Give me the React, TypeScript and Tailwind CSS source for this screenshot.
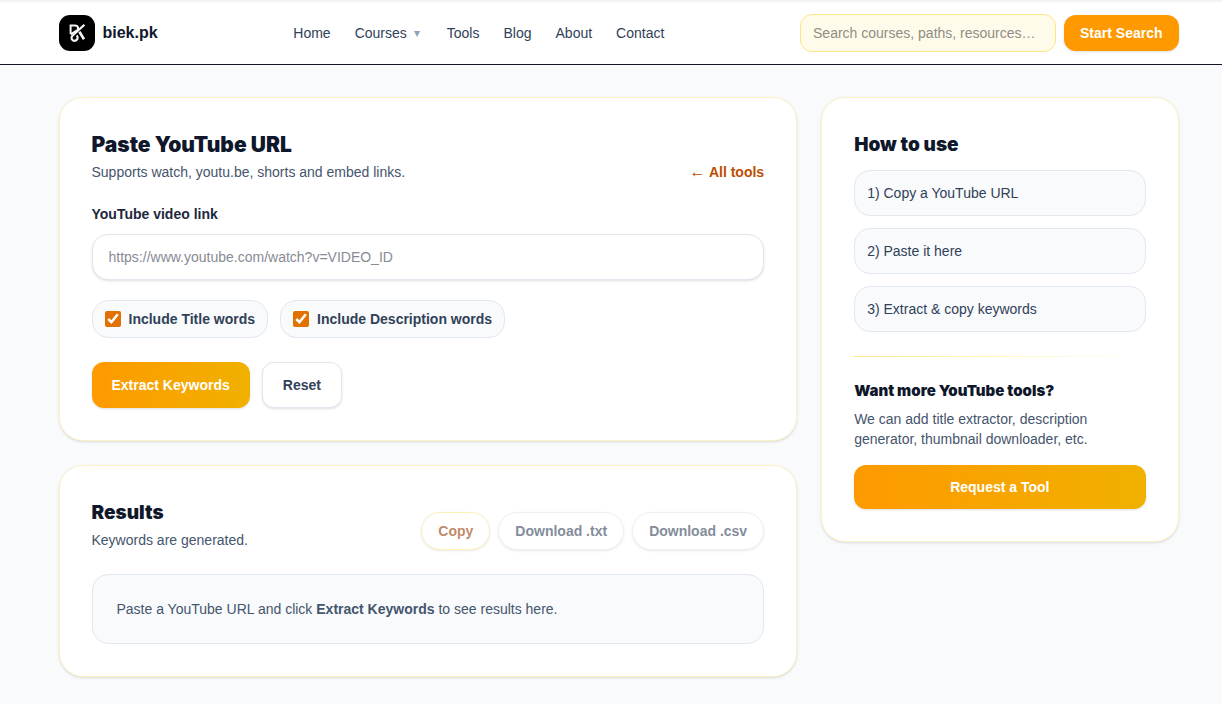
import { useState } from 'react';
import type { ReactNode } from 'react';

const links = ['Home', 'Courses', 'Tools', 'Blog', 'About', 'Contact'];

const steps = [
  '1) Copy a YouTube URL',
  '2) Paste it here',
  '3) Extract & copy keywords',
];

function Logo() {
  return (
    <svg viewBox="0 0 36 36" className="size-9" fill="none" stroke="#f5f5f5" aria-hidden="true">
      <rect width="36" height="36" rx="11" fill="black" stroke="none" />
      <path d="M11.6 19V10.6h4.2c4 0 4.2 4 1.4 5.2l-5.6 3.6" strokeWidth="2" />
      <path
        d="M25.4 9.8 13.4 20.8c-2 2.2-.4 5 2 5 3 0 4.2-3 2.4-5.4"
        strokeWidth="2.2"
      />
      <path d="m20.4 16.8 4.6 7.400" strokeWidth="2.6" />
    </svg>
  );
}

function Header() {
  return (
    <header className="border-b border-gray-900 bg-white pl-[15px]">
      <div className="mx-auto flex max-w-6xl items-center justify-between px-4 py-3">
        <a href="#" className="flex items-center gap-2">
          <Logo />
          <span className="text-base font-bold text-slate-900">biek.pk</span>
        </a>
        <nav className="flex items-center gap-6 text-slate-700">
          {links.map((link) => (
            <a key={link} href="#" className="flex items-center gap-1">
              {link}
              {link === 'Courses' && (
                <span className="w-3 text-center text-xs text-slate-400">▾</span>
              )}
            </a>
          ))}
        </nav>
        <form className="flex items-center gap-2" onSubmit={(e) => e.preventDefault()}>
          <input
            type="text"
            aria-label="Search"
            placeholder="Search courses, paths, resources…"
            className="w-64 rounded-xl border border-amber-200 bg-amber-50 px-3 py-2 placeholder:text-[#8f8d83]"
          />
          <button className="rounded-xl bg-amber-500 px-4 py-2 font-bold text-white shadow-sm">
            Start Search
          </button>
        </form>
      </div>
    </header>
  );
}

function Card({ children }: { children: ReactNode }) {
  return (
    <section className="rounded-3xl border border-amber-100 bg-white p-8 shadow-sm">
      {children}
    </section>
  );
}

function Option({ label }: { label: string }) {
  return (
    <label className="flex items-center gap-2 rounded-2xl border border-slate-200 bg-slate-50 px-3 py-2 font-bold text-slate-700">
      <input type="checkbox" defaultChecked className="size-4 accent-amber-600" />
      {label}
    </label>
  );
}

function UrlForm() {
  const [url, setUrl] = useState('');
  return (
    <Card>
      <div className="flex items-end justify-between">
        <div>
          <h2 className="font-[Inter] text-[21px] leading-[30px] font-black text-slate-900">
            Paste YouTube URL
          </h2>
          <p className="mt-0.5 text-slate-600">Supports watch, youtu.be, shorts and embed links.</p>
        </div>
        <a href="#" className="font-bold text-amber-700">
          <span className="text-base leading-none font-normal">←</span> All tools
        </a>
      </div>
      <form onSubmit={(e) => e.preventDefault()}>
        <label htmlFor="url" className="mt-5 block leading-6 font-bold text-slate-800">
          YouTube video link
        </label>
        <input
          id="url"
          value={url}
          onChange={(e) => setUrl(e.target.value)}
          placeholder="https://www.youtube.com/watch?v=VIDEO_ID"
          className="mt-2 w-full rounded-2xl border border-slate-200 bg-white px-4 py-3 shadow-sm placeholder:text-[#878b95]"
        />
        <div className="mt-5 flex flex-wrap gap-3">
          <Option label="Include Title words" />
          <Option label="Include Description words" />
        </div>
        <div className="mt-6 flex flex-wrap gap-3">
          <button className="rounded-xl bg-linear-to-r from-amber-500 to-yellow-500 px-5 py-3 font-bold text-white shadow-sm">
            Extract Keywords
          </button>
          <button
            type="button"
            onClick={() => setUrl('')}
            className="rounded-xl border border-slate-200 bg-white px-5 py-3 font-bold text-slate-700 shadow-sm"
          >
            Reset
          </button>
        </div>
      </form>
    </Card>
  );
}

function Results() {
  return (
    <Card>
      <div className="flex items-end justify-between">
        <div>
          <h2 className="font-[Inter] text-[19px] leading-[30px] font-black text-slate-900">
            Results
          </h2>
          <p className="mt-0.5 text-slate-600">Keywords are generated.</p>
        </div>
        <div className="flex gap-2 font-bold">
          <button
            disabled
            className="rounded-full border border-amber-200 bg-white px-4 py-2 text-amber-800 opacity-60 shadow-sm"
          >
            Copy
          </button>
          <button
            disabled
            className="rounded-full border border-slate-200 bg-white px-4 py-2 text-slate-700 opacity-60 shadow-sm"
          >
            Download .txt
          </button>
          <button
            disabled
            className="rounded-full border border-slate-200 bg-white px-4 py-2 text-slate-700 opacity-60 shadow-sm"
          >
            Download .csv
          </button>
        </div>
      </div>
      <div className="mt-6 rounded-2xl border border-slate-200 bg-slate-50 p-6 text-slate-600">
        Paste a YouTube URL and click <strong>Extract Keywords</strong> to see results here.
      </div>
    </Card>
  );
}

function Sidebar() {
  return (
    <Card>
      <h2 className="font-[Inter] text-[19px] leading-[30px] font-black text-slate-900">
        How to use
      </h2>
      <ol className="mt-2.5 flex flex-col gap-3 text-slate-700">
        {steps.map((step) => (
          <li key={step} className="rounded-2xl border border-slate-200 bg-slate-50 p-3">
            {step}
          </li>
        ))}
      </ol>
      <div className="mt-6 h-px bg-linear-to-r from-amber-200 via-yellow-100 to-transparent" />
      <h3 className="mt-6 font-[Inter] text-[15px] leading-5 font-black text-slate-900">
        Want more YouTube tools?
      </h3>
      <p className="mt-2 text-slate-600">
        We can add title extractor, description generator, thumbnail downloader, etc.
      </p>
      <a
        href="#"
        className="mt-4 block rounded-xl bg-linear-to-r from-amber-500 to-yellow-500 px-4 py-3 text-center font-bold text-white shadow-sm"
      >
        Request a Tool
      </a>
    </Card>
  );
}

export default function App() {
  return (
    <div className="min-h-screen border-t-2 border-gray-100 bg-slate-50 font-['Liberation_Sans',Arial,sans-serif] text-sm">
      <Header />
      <main className="pl-[15px]">
        <div className="mx-auto grid max-w-6xl grid-cols-3 items-start gap-6 px-4 py-8">
          <div className="col-span-2 flex flex-col gap-6">
            <UrlForm />
            <Results />
          </div>
          <Sidebar />
        </div>
      </main>
    </div>
  );
}
